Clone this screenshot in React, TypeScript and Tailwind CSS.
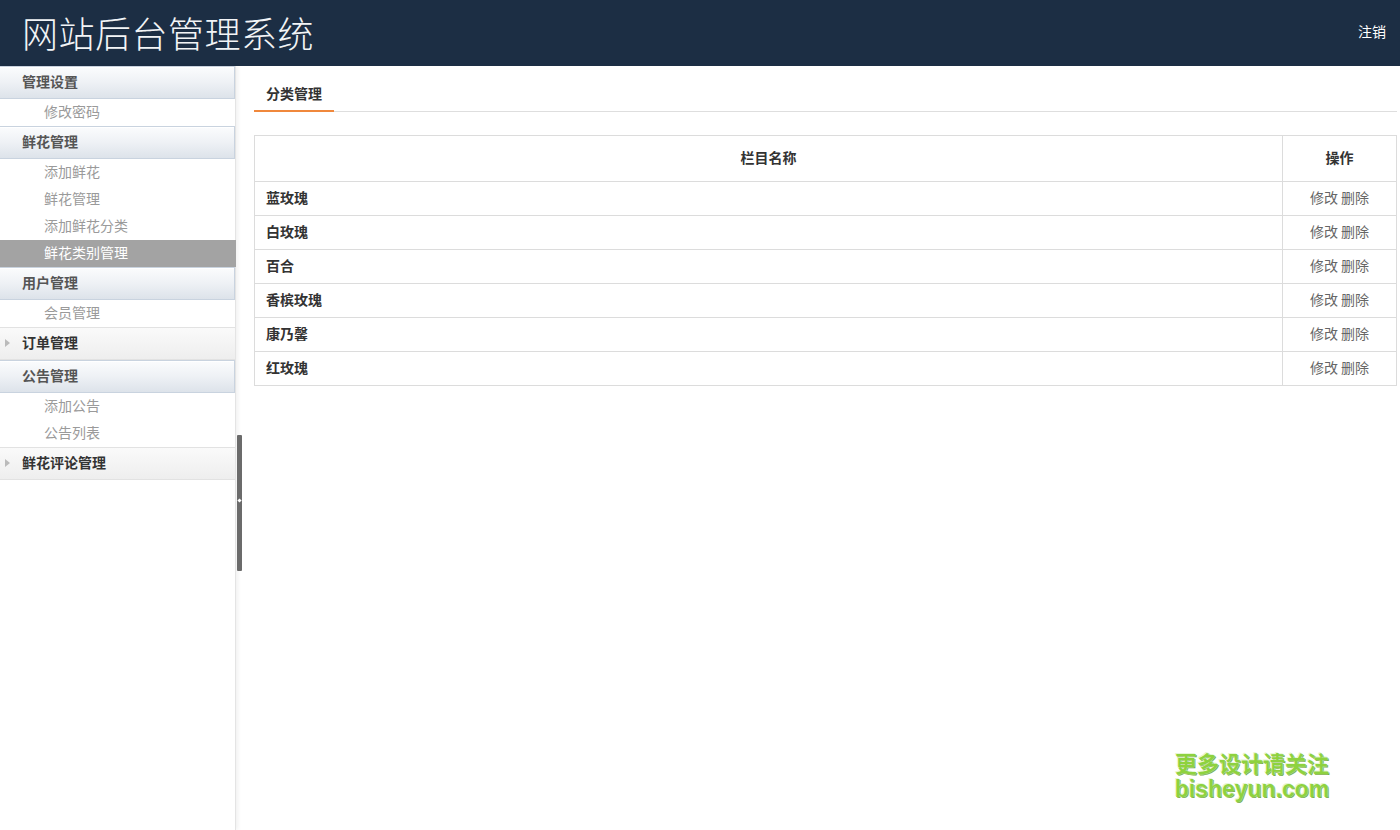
import { ReactNode } from "react";

type Group = {
  title: string;
  open: boolean;
  items: string[];
};

const groups: Group[] = [
  { title: "管理设置", open: true, items: ["修改密码"] },
  { title: "鲜花管理", open: true, items: ["添加鲜花", "鲜花管理", "添加鲜花分类", "鲜花类别管理"] },
  { title: "用户管理", open: true, items: ["会员管理"] },
  { title: "订单管理", open: false, items: [] },
  { title: "公告管理", open: true, items: ["添加公告", "公告列表"] },
  { title: "鲜花评论管理", open: false, items: [] },
];

const rows = ["蓝玫瑰", "白玫瑰", "百合", "香槟玫瑰", "康乃馨", "红玫瑰"];

const active = "鲜花类别管理";

function GroupHead({ open, children }: { open: boolean; children: ReactNode }) {
  if (open) {
    return (
      <div className="h-[33px] flex items-center pl-[22px] pb-[3px] text-[14px] font-bold text-[#555] border border-[#c9d3df] border-l-0 bg-gradient-to-b from-[#fbfcfd] via-[#eef1f5] to-[#dde3ea] shadow-[inset_0_1px_0_#fff]">
        {children}
      </div>
    );
  }
  return (
    <div className="relative h-[33px] flex items-center pl-[22px] pb-[3px] text-[14px] font-bold text-[#333] border-t border-b border-[#e2e2e2] bg-gradient-to-b from-[#fafafa] to-[#eeeeee]">
      <span className="absolute left-[5px] top-[11px] w-0 h-0 border-y-[4px] border-y-transparent border-l-[5px] border-l-[#bbb]" />
      {children}
    </div>
  );
}

export default function App() {
  return (
    <div
      className="w-[1400px] h-[830px] flex flex-col bg-white overflow-hidden"
      style={{ fontFamily: '"Noto Sans CJK SC", "Noto Sans", sans-serif' }}
    >
      {/* header */}
      <header className="h-[66px] shrink-0 bg-[#1c2e44] flex items-center justify-between pl-[22px] pr-[14px]">
        <h1 className="text-[36px] font-light text-[#f2f4f6] tracking-[0.5px] leading-none pb-[2px]">网站后台管理系统</h1>
        <a className="text-[14px] text-white pb-[4px]">注销</a>
      </header>

      <div className="flex flex-1 min-h-0">
        {/* sidebar */}
        <aside className="w-[236px] shrink-0 border-r border-[#e4e4e4] shadow-[2px_0_4px_rgba(0,0,0,0.06)]">
          {groups.map((g) => (
            <div key={g.title}>
              <GroupHead open={g.open}>{g.title}</GroupHead>
              {g.items.map((it) => (
                <div
                  key={it}
                  className={
                    it === active
                      ? "h-[27px] flex items-center pl-[44px] pb-[2px] text-[14px] text-white bg-[#a3a3a3] mr-[-1px]"
                      : "h-[27px] flex items-center pl-[44px] pb-[2px] text-[14px] text-[#9a9a9a]"
                  }
                >
                  {it}
                </div>
              ))}
            </div>
          ))}
        </aside>

        {/* splitter */}
        <div className="w-[7px] shrink-0 flex flex-col">
          <div className="h-[369px]" />
          <div className="relative h-[136px] w-[5px] ml-[1px] bg-[#6b6b6b] rounded-[1px]">
            <span className="absolute left-[1px] top-[64px] w-[3px] h-[3px] bg-white rotate-45" />
          </div>
        </div>

        {/* content */}
        <main className="flex-1 pl-[11px] pr-[3px] pt-[13px]">
          <div className="flex border-b border-[#dedede] h-[33px]">
            <div className="px-[12px] pb-[3px] flex items-center text-[14px] font-bold text-[#333] border-b-2 border-[#f0883c] mb-[-1px]">
              分类管理
            </div>
          </div>

          <table className="mt-[23px] w-full border-collapse border border-[#dcdcdc] text-[14px]">
            <thead>
              <tr className="h-[46px]">
                <th className="border border-[#dcdcdc] font-bold text-[#333] text-center pb-[2px]">栏目名称</th>
                <th className="border border-[#dcdcdc] font-bold text-[#333] text-center w-[114px] pb-[2px]">操作</th>
              </tr>
            </thead>
            <tbody>
              {rows.map((r) => (
                <tr key={r} className="h-[34px]">
                  <td className="border border-[#dcdcdc] pl-[11px] pb-[2px] font-bold text-[#333]">{r}</td>
                  <td className="border border-[#dcdcdc] text-center pb-[2px] text-[#666]">修改 删除</td>
                </tr>
              ))}
            </tbody>
          </table>

          {/* watermark */}
          <div className="mt-[363px] ml-[919px] w-[158px] whitespace-nowrap text-center font-bold text-[#8ed23f] [text-shadow:0_0_2px_#fff,1px_1px_0_#6aa62a,-1px_-1px_0_#dff5c8]">
            <div className="text-[22px] leading-[26px]">更多设计请关注</div>
            <div className="text-[23px] leading-[26px] mt-[1px]" style={{ fontFamily: '"Liberation Sans", Arial, sans-serif' }}>bisheyun.com</div>
          </div>
        </main>
      </div>
    </div>
  );
}
